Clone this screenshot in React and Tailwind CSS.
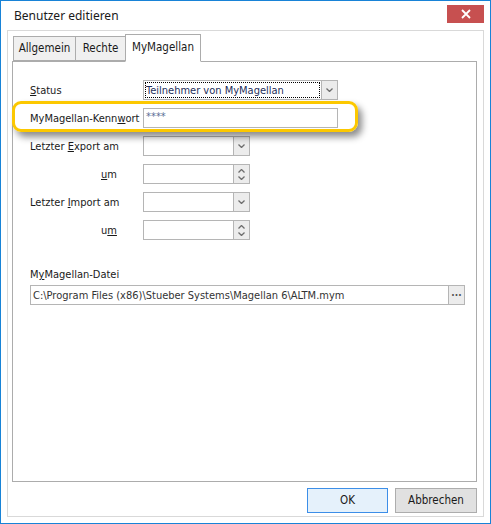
import { useState } from "react";

const FONT = { fontFamily: '"DejaVu Sans Condensed", "DejaVu Sans", sans-serif' };

function Chevron({ up = false }) {
  return (
    <svg width="7" height="4" viewBox="0 0 7 4" className={up ? "rotate-180" : ""}>
      <path d="M0.5 0.5 L3.5 3.5 L6.5 0.5" fill="none" stroke="#6d6d6d" strokeWidth="1.3" />
    </svg>
  );
}

function Combo({ width, value, focused }) {
  return (
    <div className="flex h-[20px] border border-[#b5b5b5] bg-white" style={{ width }}>
      <div className="flex min-w-0 flex-1 items-center px-[1px]">
        {value && (
          <span
            className={`flex h-[16px] w-full items-center whitespace-nowrap px-[1px] text-[11px] leading-none text-[#1e2f5c] ${
              focused ? "outline outline-1 outline-dotted outline-black -outline-offset-1" : ""
            }`}
          >
            {value}
          </span>
        )}
      </div>
      <div className="flex w-[16px] items-center justify-center border-l border-[#b5b5b5] bg-[#ececec]">
        <Chevron />
      </div>
    </div>
  );
}

function Spinner({ width }) {
  return (
    <div className="flex h-[20px] border border-[#b5b5b5] bg-white" style={{ width }}>
      <div className="flex-1" />
      <div className="flex w-[16px] flex-col items-center justify-center gap-[3px] border-l border-[#b5b5b5] bg-[#ececec]">
        <Chevron up />
        <Chevron />
      </div>
    </div>
  );
}

function Label({ children, className = "" }) {
  return <span className={`text-[11px] leading-none text-[#1a1a1a] ${className}`}>{children}</span>;
}

export default function App() {
  const [tab] = useState("MyMagellan");
  const tabs = [
    { name: "Allgemein", w: 63 },
    { name: "Rechte", w: 51 },
    { name: "MyMagellan", w: 76 },
  ];

  return (
    <div className="flex h-[524px] w-[491px] flex-col border border-[#1883d7] bg-white" style={FONT}>
      {/* title bar */}
      <div className="flex h-[29px] shrink-0 items-center justify-between bg-white">
        <span
          className="pl-[13px] pt-[1px] text-[12px] text-[#1a1a1a]"
          style={{ fontFamily: '"Noto Sans", sans-serif' }}
        >
          Benutzer editieren
        </span>
        <button className="mr-[6px] mb-[4px] flex h-[18px] w-[37px] items-center justify-center bg-[#c75050]">
          <svg width="10" height="10" viewBox="0 0 10 10">
            <path d="M1 1 L9 9 M9 1 L1 9" stroke="white" strokeWidth="1.8" />
          </svg>
        </button>
      </div>

      {/* frame */}
      <div className="mx-[6px] mb-[6px] flex flex-1 flex-col border border-[#d9d9d9] bg-white pl-[4px] pr-[6px] pt-[4px] pb-[3px]">
        {/* tabs */}
        <div className="flex h-[26px] items-end pl-[1px]">
          {tabs.map((t) => {
            const active = t.name === tab;
            return (
              <div
                key={t.name}
                className={`relative flex items-center justify-center border border-[#acacac] text-[11.5px] leading-none text-[#1a1a1a] ${
                  active
                    ? "z-10 -mb-[1px] h-[28px] border-b-white bg-white pb-[1px]"
                    : "-mr-[1px] h-[25px] bg-[#f0f0f0]"
                }`}
                style={{ width: t.w }}
              >
                {t.name}
              </div>
            );
          })}
        </div>

        {/* tab panel */}
        <div className="relative flex h-[421px] flex-col border border-[#acacac] bg-white pt-[18px] pl-[17px]">
          {/* highlight overlay */}
          <div className="pointer-events-none absolute left-[-1px] top-[39px] h-[31px] w-[346px] rounded-[9px] border-[3px] border-[#fcc800] shadow-[4px_5px_7px_rgba(0,0,0,0.45)]" />

          <div className="flex flex-col gap-[8px]">
            <div className="flex items-center">
              <Label className="w-[113px]">
                <u>S</u>tatus
              </Label>
              <Combo width={195} value="Teilnehmer von MyMagellan" focused />
            </div>
            <div className="flex items-center">
              <Label className="w-[113px]">
                MyMagellan-Kenn<u>w</u>ort
              </Label>
              <div className="h-[20px] w-[195px] border border-[#b5b5b5] bg-white pl-[2px] pt-[2px] text-[11px] leading-none text-[#5b6f95]">
                ****
              </div>
            </div>
            <div className="flex items-center">
              <Label className="w-[113px]">
                Letzter <u>E</u>xport am
              </Label>
              <Combo width={107} />
            </div>
            <div className="flex items-center">
              <Label className="w-[113px] pl-[71px]">
                <u>u</u>m
              </Label>
              <Spinner width={107} />
            </div>
            <div className="flex items-center">
              <Label className="w-[113px]">
                Letzter <u>I</u>mport am
              </Label>
              <Combo width={107} />
            </div>
            <div className="flex items-center">
              <Label className="w-[113px] pl-[71px]">
                u<u>m</u>
              </Label>
              <Spinner width={107} />
            </div>
          </div>

          <div className="mt-[29px] flex flex-col gap-[5px]">
            <Label>
              M<u>y</u>Magellan-Datei
            </Label>
            <div className="flex h-[20px] w-[435px] border border-[#b5b5b5] bg-white">
              <div className="flex flex-1 items-center pl-[2px] text-[11px] leading-none text-[#333]">
                C:\Program Files (x86)\Stueber Systems\Magellan 6\ALTM.mym
              </div>
              <div className="flex w-[16px] items-end justify-center border-l border-[#b5b5b5] bg-[#ececec] pb-[6px] text-[10px] font-bold leading-none text-[#555]">
                ...
              </div>
            </div>
          </div>
        </div>

        {/* buttons */}
        <div className="mt-auto flex justify-end gap-[7px]">
          <button className="h-[25px] w-[81px] border border-[#3c8ee8] bg-[#e5f1fb] text-[11.5px] text-[#1a1a1a]">
            OK
          </button>
          <button className="h-[25px] w-[82px] border border-[#adadad] bg-[#e1e1e1] text-[11.5px] text-[#1a1a1a]">
            Abbrechen
          </button>
        </div>
      </div>
    </div>
  );
}
